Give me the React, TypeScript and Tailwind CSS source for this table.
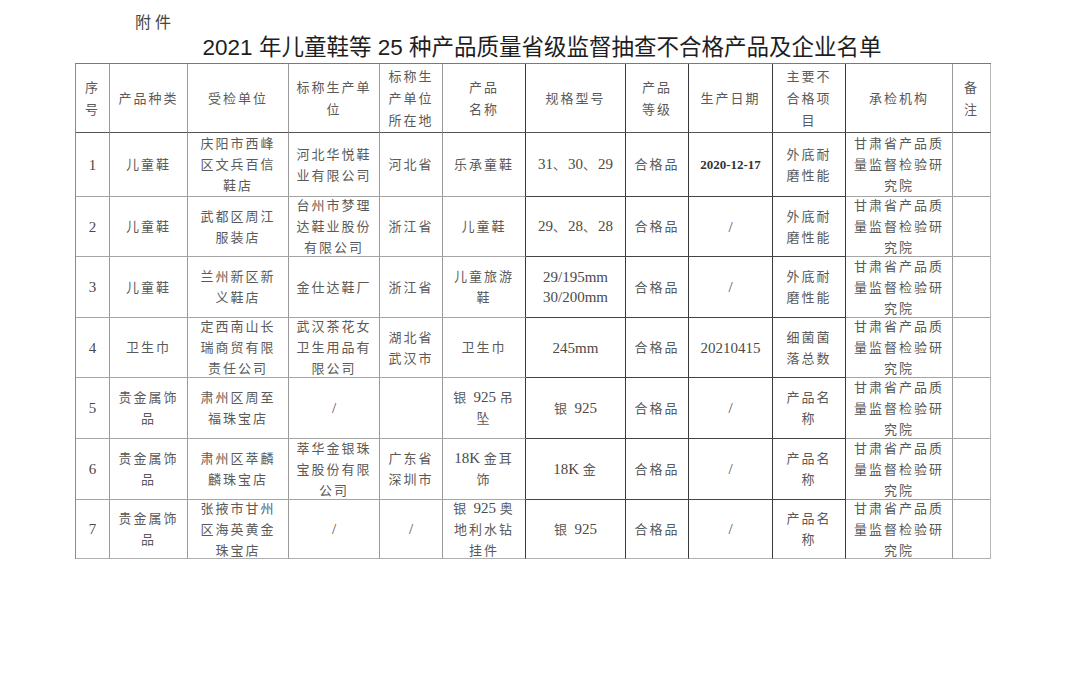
import React from "react";

type Cell = string[];

const header: Cell[] = [
  ["序", "号"],
  ["产品种类"],
  ["受检单位"],
  ["标称生产单", "位"],
  ["标称生", "产单位", "所在地"],
  ["产品", "名称"],
  ["规格型号"],
  ["产品", "等级"],
  ["生产日期"],
  ["主要不", "合格项", "目"],
  ["承检机构"],
  ["备", "注"],
];

const inst: Cell = ["甘肃省产品质", "量监督检验研", "究院"];

const rows: Cell[][] = [
  [["1"], ["儿童鞋"], ["庆阳市西峰", "区文兵百信", "鞋店"], ["河北华悦鞋", "业有限公司"], ["河北省"], ["乐承童鞋"], ["31、30、29"], ["合格品"], ["2020-12-17"], ["外底耐", "磨性能"], inst, []],
  [["2"], ["儿童鞋"], ["武都区周江", "服装店"], ["台州市梦理", "达鞋业股份", "有限公司"], ["浙江省"], ["儿童鞋"], ["29、28、28"], ["合格品"], ["/"], ["外底耐", "磨性能"], inst, []],
  [["3"], ["儿童鞋"], ["兰州新区新", "义鞋店"], ["金仕达鞋厂"], ["浙江省"], ["儿童旅游", "鞋"], ["29/195mm", "30/200mm"], ["合格品"], ["/"], ["外底耐", "磨性能"], inst, []],
  [["4"], ["卫生巾"], ["定西南山长", "瑞商贸有限", "责任公司"], ["武汉茶花女", "卫生用品有", "限公司"], ["湖北省", "武汉市"], ["卫生巾"], ["245mm"], ["合格品"], ["20210415"], ["细菌菌", "落总数"], inst, []],
  [["5"], ["贵金属饰", "品"], ["肃州区周至", "福珠宝店"], ["/"], [], ["银 925 吊", "坠"], ["银 925"], ["合格品"], ["/"], ["产品名", "称"], inst, []],
  [["6"], ["贵金属饰", "品"], ["肃州区萃麟", "麟珠宝店"], ["萃华金银珠", "宝股份有限", "公司"], ["广东省", "深圳市"], ["18K 金耳", "饰"], ["18K 金"], ["合格品"], ["/"], ["产品名", "称"], inst, []],
  [["7"], ["贵金属饰", "品"], ["张掖市甘州", "区海英黄金", "珠宝店"], ["/"], ["/"], ["银 925 奥", "地利水钻", "挂件"], ["银 925"], ["合格品"], ["/"], ["产品名", "称"], inst, []],
];

const rightBorder = [
  "border-r-[#9a9a9a]",
  "border-r-[#9a9a9a]",
  "border-r-[#9a9a9a]",
  "border-r-[#9a9a9a]",
  "border-r-[#9a9a9a]",
  "border-r-[#3a3a3a]",
  "border-r-[#3a3a3a]",
  "border-r-[#3a3a3a]",
  "border-r-[#3a3a3a]",
  "border-r-[#3a3a3a]",
  "border-r-[#9a9a9a]",
  "border-r-[#b5b5b5]",
];

const isCJK = (ch: string) => /[\u3000-\u303f\u4e00-\u9fff]/.test(ch);

function splitRuns(s: string): { text: string; cjk: boolean }[] {
  const runs: { text: string; cjk: boolean }[] = [];
  for (const ch of s) {
    const c = ch === " " ? (runs.length ? runs[runs.length - 1].cjk : false) : isCJK(ch);
    if (runs.length && runs[runs.length - 1].cjk === c) runs[runs.length - 1].text += ch;
    else runs.push({ text: ch, cjk: c });
  }
  return runs;
}

function Line({ text, bold }: { text: string; bold?: boolean }) {
  const runs = splitRuns(text);
  return (
    <div className="whitespace-pre">
      {runs.map((r, i) =>
        r.cjk ? (
          <span key={i} className="text-[13px] tracking-[2px] text-[#5a5a5a]">
            {r.text}
          </span>
        ) : (
          <span
            key={i}
            className={
              bold
                ? "text-[13px] font-bold tracking-normal text-[#333333]"
                : "text-[15px] tracking-normal text-[#4a4a4a]"
            }
          >
            {r.text}
          </span>
        )
      )}
    </div>
  );
}

function CellView({ lines, col, header: isHeader, last }: { lines: Cell; col: number; header?: boolean; last?: boolean }) {
  const darkBottom = !isHeader && col >= 6 && col <= 9;
  const bottom = isHeader
    ? "border-b-[#555555]"
    : last
    ? "border-b-[#b0b0b0]"
    : darkBottom
    ? "border-b-[#444444]"
    : "border-b-[#a5a5a5]";
  const isDate = !isHeader && col === 8 && lines[0] === "2020-12-17";
  return (
    <div
      className={`flex flex-col items-center justify-center border-r border-b ${rightBorder[col]} ${bottom} text-center overflow-hidden ${
        isHeader ? "leading-[21px]" : "leading-[20px]"
      }`}
    >
      {lines.map((l, i) => (
        <Line key={i} text={l} bold={isDate} />
      ))}
    </div>
  );
}

export default function App() {
  return (
    <div className="w-[1079px] h-[676px] bg-white overflow-hidden pt-[10px]">
      <div
        className="pl-[135px] h-[22px] leading-[22px] text-[16px] tracking-[4px] text-[#444444]"
        style={{ fontFamily: '"Noto Sans CJK SC", sans-serif' }}
      >
        附件
      </div>
      <div
        className="h-[31px] leading-[31px] text-center text-[22.5px] text-[#1e1e1e] pl-[5px]"
        style={{ fontFamily: '"Liberation Sans", "Noto Sans CJK SC", sans-serif' }}
      >
        2021 年儿童鞋等 25 种产品质量省级监督抽查不合格产品及企业名单
      </div>
      <div
        className="ml-[75px] w-[916px] grid grid-cols-[34px_78px_101px_91px_63px_83px_100px_63px_84px_73px_107px_38px] grid-rows-[69px_64px_60px_61px_60px_61px_61px_59px] border-l border-t border-l-[#8c8c8c] border-t-[#7a7a7a]"
        style={{ fontFamily: '"Liberation Serif", "Noto Sans CJK SC", serif' }}
      >
        {header.map((c, i) => (
          <CellView key={`h${i}`} lines={c} col={i} header />
        ))}
        {rows.map((r, ri) =>
          r.map((c, ci) => <CellView key={`${ri}-${ci}`} lines={c} col={ci} last={ri === rows.length - 1} />)
        )}
      </div>
    </div>
  );
}
